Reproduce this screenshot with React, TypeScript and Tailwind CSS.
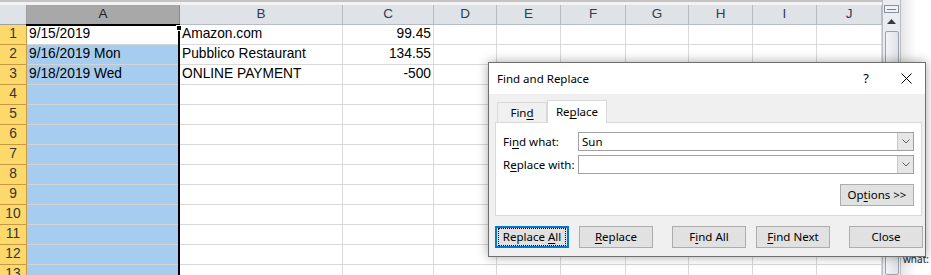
import React from "react";

const cols = [
  { name: "B", w: 163 },
  { name: "C", w: 91 },
  { name: "D", w: 63 },
  { name: "E", w: 64 },
  { name: "F", w: 65 },
  { name: "G", w: 63 },
  { name: "H", w: 64 },
  { name: "I", w: 64 },
  { name: "J", w: 65 },
];

const rows: { a: string; b: string; c: string }[] = [
  { a: "9/15/2019", b: "Amazon.com", c: "99.45" },
  { a: "9/16/2019 Mon", b: "Pubblico Restaurant", c: "134.55" },
  { a: "9/18/2019 Wed", b: "ONLINE PAYMENT", c: "-500" },
];

const cellFont = { fontFamily: '"Liberation Sans", Arial, sans-serif' };
const uiFont = { fontFamily: '"Noto Sans", "Open Sans", sans-serif' };

function U({ children }: { children: React.ReactNode }) {
  return <span className="underline underline-offset-2">{children}</span>;
}

function Btn({
  children,
  className = "",
  focused = false,
}: {
  children: React.ReactNode;
  className?: string;
  focused?: boolean;
}) {
  return (
    <div
      className={`shrink-0 h-[22px] w-[74px] flex items-center justify-center text-[11.5px] text-black bg-[#e1e1e1] ${
        focused ? "border-2 border-[#0078d7]" : "border border-[#adadad]"
      } ${className}`}
    >
      {focused ? (
        <div className="w-full h-full m-px border border-dotted border-black flex items-center justify-center">
          {children}
        </div>
      ) : (
        children
      )}
    </div>
  );
}

function Combo({ value }: { value: string }) {
  return (
    <div className="ml-auto shrink-0 h-[19px] w-[336px] flex border border-[#a0a0a0] bg-white">
      <div className="flex-1 pl-[3px] text-[11.5px] leading-[17px] text-black">{value}</div>
      <div className="w-[16px] h-full bg-[#e6e6e6] border-l border-[#c8c8c8] flex items-center justify-center">
        <svg width="8" height="5" viewBox="0 0 8 5">
          <polyline points="0.5,0.5 4,4 7.5,0.5" fill="none" stroke="#606060" strokeWidth="1" />
        </svg>
      </div>
    </div>
  );
}

function Dialog() {
  return (
    <div
      className="absolute left-[488px] top-[62px] w-[438px] h-[195px] border border-[#6f6f6f] bg-[#f0f0f0] flex flex-col shadow-[0_0_10px_rgba(0,0,0,0.35)]"
      style={uiFont}
    >
      <div className="h-[31px] bg-white flex items-center pl-[8px] text-[11.5px] text-black">
        <span>Find and Replace</span>
        <span className="ml-auto mr-[32px] text-[13px]">?</span>
        <svg className="mr-[13px]" width="11" height="11" viewBox="0 0 11 11">
          <path d="M0.5 0.5 L10.5 10.5 M10.5 0.5 L0.5 10.5" stroke="#000" strokeWidth="1" />
        </svg>
      </div>
      <div className="pl-[6px] pr-[3px] pt-[6px] flex flex-col">
        <div className="flex items-end h-[22px] pl-[2px] text-[11.5px] text-black">
          <div className="w-[50px] h-[20px] border border-b-0 border-[#d9d9d9] flex items-center justify-center">
            <span>
              Fin<U>d</U>
            </span>
          </div>
          <div className="w-[60px] h-[23px] -mb-px bg-white border border-b-0 border-[#d9d9d9] flex items-center justify-center relative z-10">
            <span>
              Re<U>p</U>lace
            </span>
          </div>
        </div>
        <div className="w-[427px] h-[94px] bg-white border border-[#d9d9d9] px-[7px] pt-[9px] flex flex-col text-[11.5px] text-black">
          <div className="flex items-center h-[19px]">
            <span>
              Fi<U>n</U>d what:
            </span>
            <Combo value="Sun" />
          </div>
          <div className="flex items-center h-[19px] mt-[4px]">
            <span>
              R<U>e</U>place with:
            </span>
            <Combo value="" />
          </div>
          <div className="flex justify-end mt-[10px]">
            <Btn className="w-[73px]">
              <span>
                Op<U>t</U>ions &gt;&gt;
              </span>
            </Btn>
          </div>
        </div>
        <div className="flex mt-[10px]">
          <Btn focused>
            <span>
              Replace <U>A</U>ll
            </span>
          </Btn>
          <Btn className="ml-[10px]">
            <span>
              <U>R</U>eplace
            </span>
          </Btn>
          <Btn className="ml-[19px]">
            <span>
              F<U>i</U>nd All
            </span>
          </Btn>
          <Btn className="ml-[10px]">
            <span>
              <U>F</U>ind Next
            </span>
          </Btn>
          <Btn className="ml-[19px] w-[73px]">
            <span>Close</span>
          </Btn>
        </div>
      </div>
    </div>
  );
}

export default function App() {
  const rowNums = Array.from({ length: 13 }, (_, i) => i + 1);
  return (
    <div className="relative w-[931px] h-[275px] overflow-hidden bg-white" style={cellFont}>
      <div className="flex">
        <div className="w-[882px] flex flex-col">
          {/* top strip */}
          <div className="h-[5px] bg-[#f3f3f3] border-t-[2px] border-[#c4c4c4]" />
          {/* column headers */}
          <div className="flex h-[20px] text-[13.5px]">
            <div className="w-[27px] h-full bg-[#dfe3e8] border-r border-b border-[#9f9f9f]" />
            <div className="w-[153px] h-full bg-[#a8a8a8] border-r border-b border-[#8a8a8a] flex items-center justify-center text-[#222]">
              A
            </div>
            {cols.map((c) => (
              <div
                key={c.name}
                style={{ width: c.w }}
                className="h-full bg-[#dfe3e8] border-r border-b border-[#b6bcc6] flex items-center justify-center text-[#2e3d52]"
              >
                {c.name}
              </div>
            ))}
          </div>
          {/* rows */}
          {rowNums.map((n) => {
            const r = rows[n - 1];
            return (
              <div key={n} className="flex h-[20px] text-[13.75px] text-black">
                <div className="w-[27px] h-full bg-[#fdd96c] border-r border-b border-[#c99a43] flex items-center justify-center text-[#333]">
                  {n}
                </div>
                <div
                  className={`w-[153px] h-full border-r border-b border-[#d4d4d4] pl-[2px] flex items-center ${
                    n === 1 ? "bg-white" : "bg-[#a6cdef]"
                  }`}
                >
                  {r?.a}
                </div>
                {cols.map((c) => (
                  <div
                    key={c.name}
                    style={{ width: c.w }}
                    className={`h-full border-r border-b border-[#d9d9d9] flex items-center px-[2px] ${
                      c.name === "C" ? "justify-end" : ""
                    }`}
                  >
                    {c.name === "B" ? r?.b : c.name === "C" ? r?.c : ""}
                  </div>
                ))}
              </div>
            );
          })}
        </div>
        {/* vertical scrollbar */}
        <div className="w-[19px] h-[275px] bg-[#e9ecf0] border-l border-r border-[#b9bec6] flex flex-col items-center">
          <div className="mt-[5px] w-[15px] h-[8px] bg-[#eef1f5] border border-[#8a929c] flex items-center justify-center">
            <div className="w-[9px] h-px bg-[#7a818a]" />
          </div>
          <svg className="mt-[6px]" width="9" height="5" viewBox="0 0 9 5">
            <polygon points="0,5 4.5,0 9,5" fill="#3c3c3c" />
          </svg>
          <div className="mt-[7px] w-[14px] flex-1 bg-gradient-to-r from-[#f2f4f7] to-[#dde2e8] border border-[#9aa3ad] rounded-[2px]" />
        </div>
        <div className="flex-1 h-[275px] bg-gradient-to-r from-[#e6e6e6] via-white to-white relative">
          <div className="absolute left-[2px] top-[252px] text-[10px] text-[#222]" style={uiFont}>
            what:
          </div>
        </div>
      </div>
      {/* selection outline for column A */}
      <div className="absolute left-[26px] top-[24px] w-[154px] h-[260px] border-t-2 border-r-2 border-black pointer-events-none" />
      <div className="absolute left-[176px] top-[25px] w-[6px] h-[6px] bg-black border border-white" />
      <Dialog />
    </div>
  );
}
